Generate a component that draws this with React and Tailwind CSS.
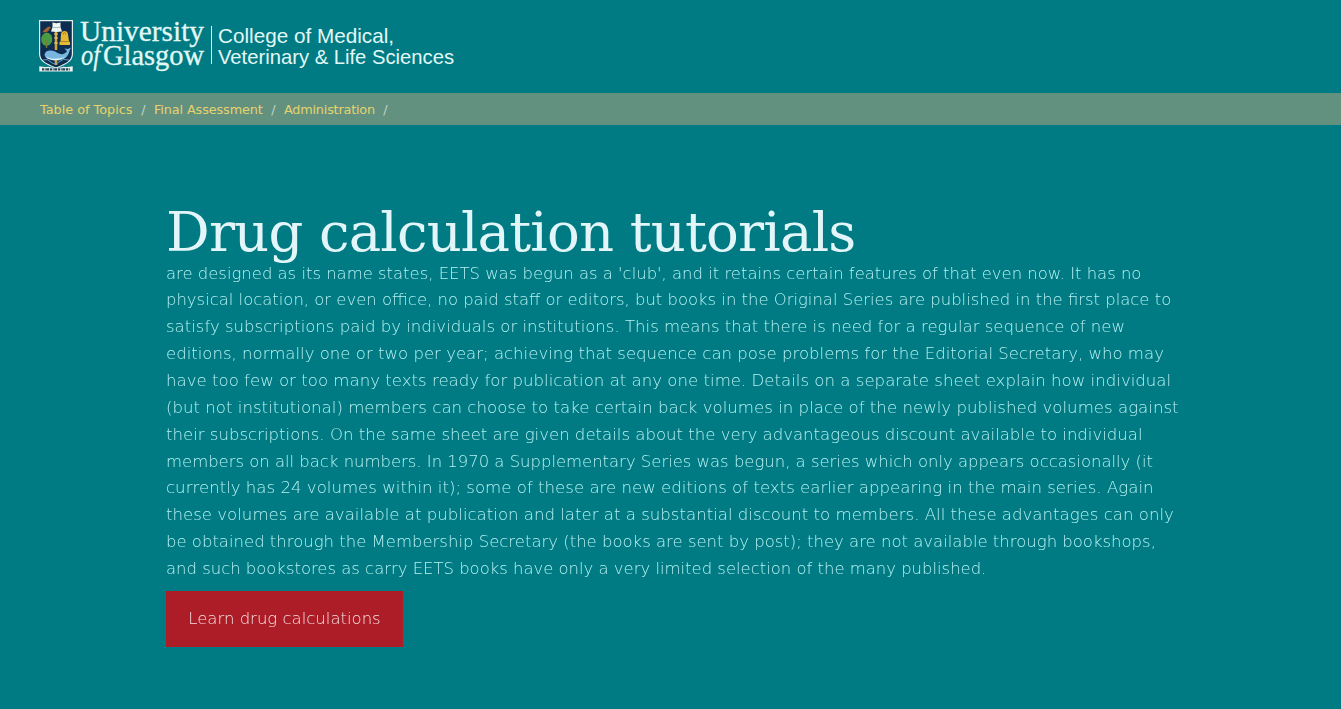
const crumbs = [
  { label: "Table of Topics", style: "w-[93px]" },
  { label: "Final Assessment", style: "w-[109px] tracking-[-0.1px]" },
  { label: "Administration", style: "w-[91px] tracking-[-0.2px]" },
];

const lines = [
  { size: "text-[16.46px]", text: "are designed as its name states, EETS was begun as a 'club', and it retains certain features of that even now. It has no" },
  { size: "text-[16.45px]", text: "physical location, or even office, no paid staff or editors, but books in the Original Series are published in the first place to" },
  { size: "text-[16.55px]", text: "satisfy subscriptions paid by individuals or institutions. This means that there is need for a regular sequence of new" },
  { size: "text-[16.56px]", text: "editions, normally one or two per year; achieving that sequence can pose problems for the Editorial Secretary, who may" },
  { size: "text-[16.6px]", text: "have too few or too many texts ready for publication at any one time. Details on a separate sheet explain how individual" },
  { size: "text-[16.63px]", text: "(but not institutional) members can choose to take certain back volumes in place of the newly published volumes against" },
  { size: "text-[16.56px]", text: "their subscriptions. On the same sheet are given details about the very advantageous discount available to individual" },
  { size: "text-[16.45px]", text: "members on all back numbers. In 1970 a Supplementary Series was begun, a series which only appears occasionally (it" },
  { size: "text-[16.6px]", text: "currently has 24 volumes within it); some of these are new editions of texts earlier appearing in the main series. Again" },
  { size: "text-[16.58px]", text: "these volumes are available at publication and later at a substantial discount to members. All these advantages can only" },
  { size: "text-[16.49px]", text: "be obtained through the Membership Secretary (the books are sent by post); they are not available through bookshops," },
  { size: "text-[16.47px]", text: "and such bookstores as carry EETS books have only a very limited selection of the many published." },
];

function Crest() {
  return (
    <svg className="h-[52px] w-[34px] shrink-0" viewBox="0 0 34 52">
      <path d="M.6.6H33.4V34C33.4 41 27 44 17 48C7 44 .6 41 .6 34Z" fill="#0d2c50" stroke="#e0f1ee" strokeWidth="1.2" />
      <path d="M17 11V30M17 38V45" stroke="#d3a735" strokeWidth="2.5" />
      <path d="M15 14H19M15 18H19M15 23H19" stroke="#edcf73" strokeWidth="1" />
      <path d="M13.5 2.5L17.5 3.2L21.5 2.5V7L23 11.5L17.3 12L12 11.5L13.5 7Z" fill="#eef5ef" />
      <path d="M13 7.5H22" stroke="#8aa9bc" strokeWidth=".7" />
      <path d="M3.5 12.5C5 9 7 9 8.5 7L11 6.5L12 8L10.5 8.5C10 12 7 12 3.5 12.5Z" fill="#a8622f" />
      <path d="M7.5 12.5L10 13.3L12.3 15L13.2 18L13 22L10.5 25L7.5 26L4.5 25L2.5 22L2.2 18L3.5 15L5.5 13.3Z" fill="#4b9b45" />
      <path d="M7.5 20V28" stroke="#6f8132" strokeWidth="1.4" />
      <path d="M22 14Q22.5 11 25.5 11Q28.5 11 29 14L30 21.5L31 22V25H20.5V22L21.5 21.5Z" fill="#e6b834" />
      <path d="M24 14.5Q25.5 10.5 27 14.5M21.5 21.5H29.5" fill="none" stroke="#9b7322" strokeWidth=".8" />
      <path d="M5.5 35C6 30 12 29.5 17 32C21 35 26 35 28 31L25.5 28.5L29 29L32 27.5L30.5 31C29 38 23 41 16 40.5C10 40 6 38 5.5 35Z" fill="#78b6df" />
      <path d="M6.5 36.5C13 40 21 39 26.5 36.5C22 41 11 42 6.5 36.5Z" fill="#e5f4f7" />
      <path d="M4 40Q8 38 12 42T20 42T30 40" fill="none" stroke="#79b5d6" strokeWidth=".8" />
      <path d="M.3 46.2Q5 47.4 9 46.8Q17 48.5 25 46.8Q29 47.4 33.7 46.2V51.6H.3Z" fill="#eaf3ed" />
      <path d="M3 49.3H31" stroke="#27435a" strokeWidth="2.2" strokeDasharray="2 .7 1 .5 3 .8" />
    </svg>
  );
}

function Logo() {
  return (
    <div className="flex h-[93px] items-start pl-[39px] pt-[9px] text-[#e2f8f7]">
      <div className="pt-[11px]"><Crest /></div>
      <svg className="h-[76px] w-[390px]" viewBox="0 -10 390 76" fill="currentColor">
        <g fontFamily="'Liberation Serif', serif" fontSize="30" stroke="currentColor" strokeWidth=".3">
          <text x="7" y="22.3" textLength="124" lengthAdjust="spacingAndGlyphs">University</text>
          <text x="8" y="45.5" fontStyle="italic" textLength="19" lengthAdjust="spacingAndGlyphs">of</text>
          <text x="30" y="45.5" textLength="101" lengthAdjust="spacingAndGlyphs">Glasgow</text>
        </g>
        <path d="M138 7h1v38h-1z" />
        <g fontFamily="'Liberation Sans', sans-serif" fontSize="21">
          <text x="145" y="24" textLength="176" lengthAdjust="spacingAndGlyphs">College of Medical,</text>
          <text x="145" y="45" textLength="236" lengthAdjust="spacingAndGlyphs">Veterinary &amp; Life Sciences</text>
        </g>
      </svg>
    </div>
  );
}

export default function App() {
  return (
    <div className="min-h-screen bg-[#007b83] font-['DejaVu_Sans',sans-serif]">
      <header>
        <Logo />
        <nav className="flex h-8 items-center bg-[#639180] pl-10 pt-0.5 text-[12.8px]">
          {crumbs.map(({ label, style }) => (
            <span key={label} className="flex whitespace-nowrap">
              <a href="#" className={`${style} text-[#e6d36b]`}>{label}</a>
              <span className="w-[21px] text-center text-[#bfd1c8]">/</span>
            </span>
          ))}
        </nav>
      </header>
      <main className="ml-[166px] w-[1015px] pt-[79px] will-change-transform">
        <h1 className="font-['DejaVu_Serif',serif] text-[54.5px] leading-[56.6px] tracking-[-0.82px] text-[#e2f6f9]">Drug calculation tutorials</h1>
        <p className="font-extralight text-[#b5f0f2]">
          {lines.map(({ size, text }) => (
            <span key={text} className={`${size} block whitespace-nowrap leading-[26.86px]`}>{text}</span>
          ))}
        </p>
        <button className="mt-[8px] h-14 w-[237px] bg-[#ac1d27] pt-px text-[16.5px] font-extralight text-[#f5dfe0]">Learn drug calculations</button>
      </main>
    </div>
  );
}
